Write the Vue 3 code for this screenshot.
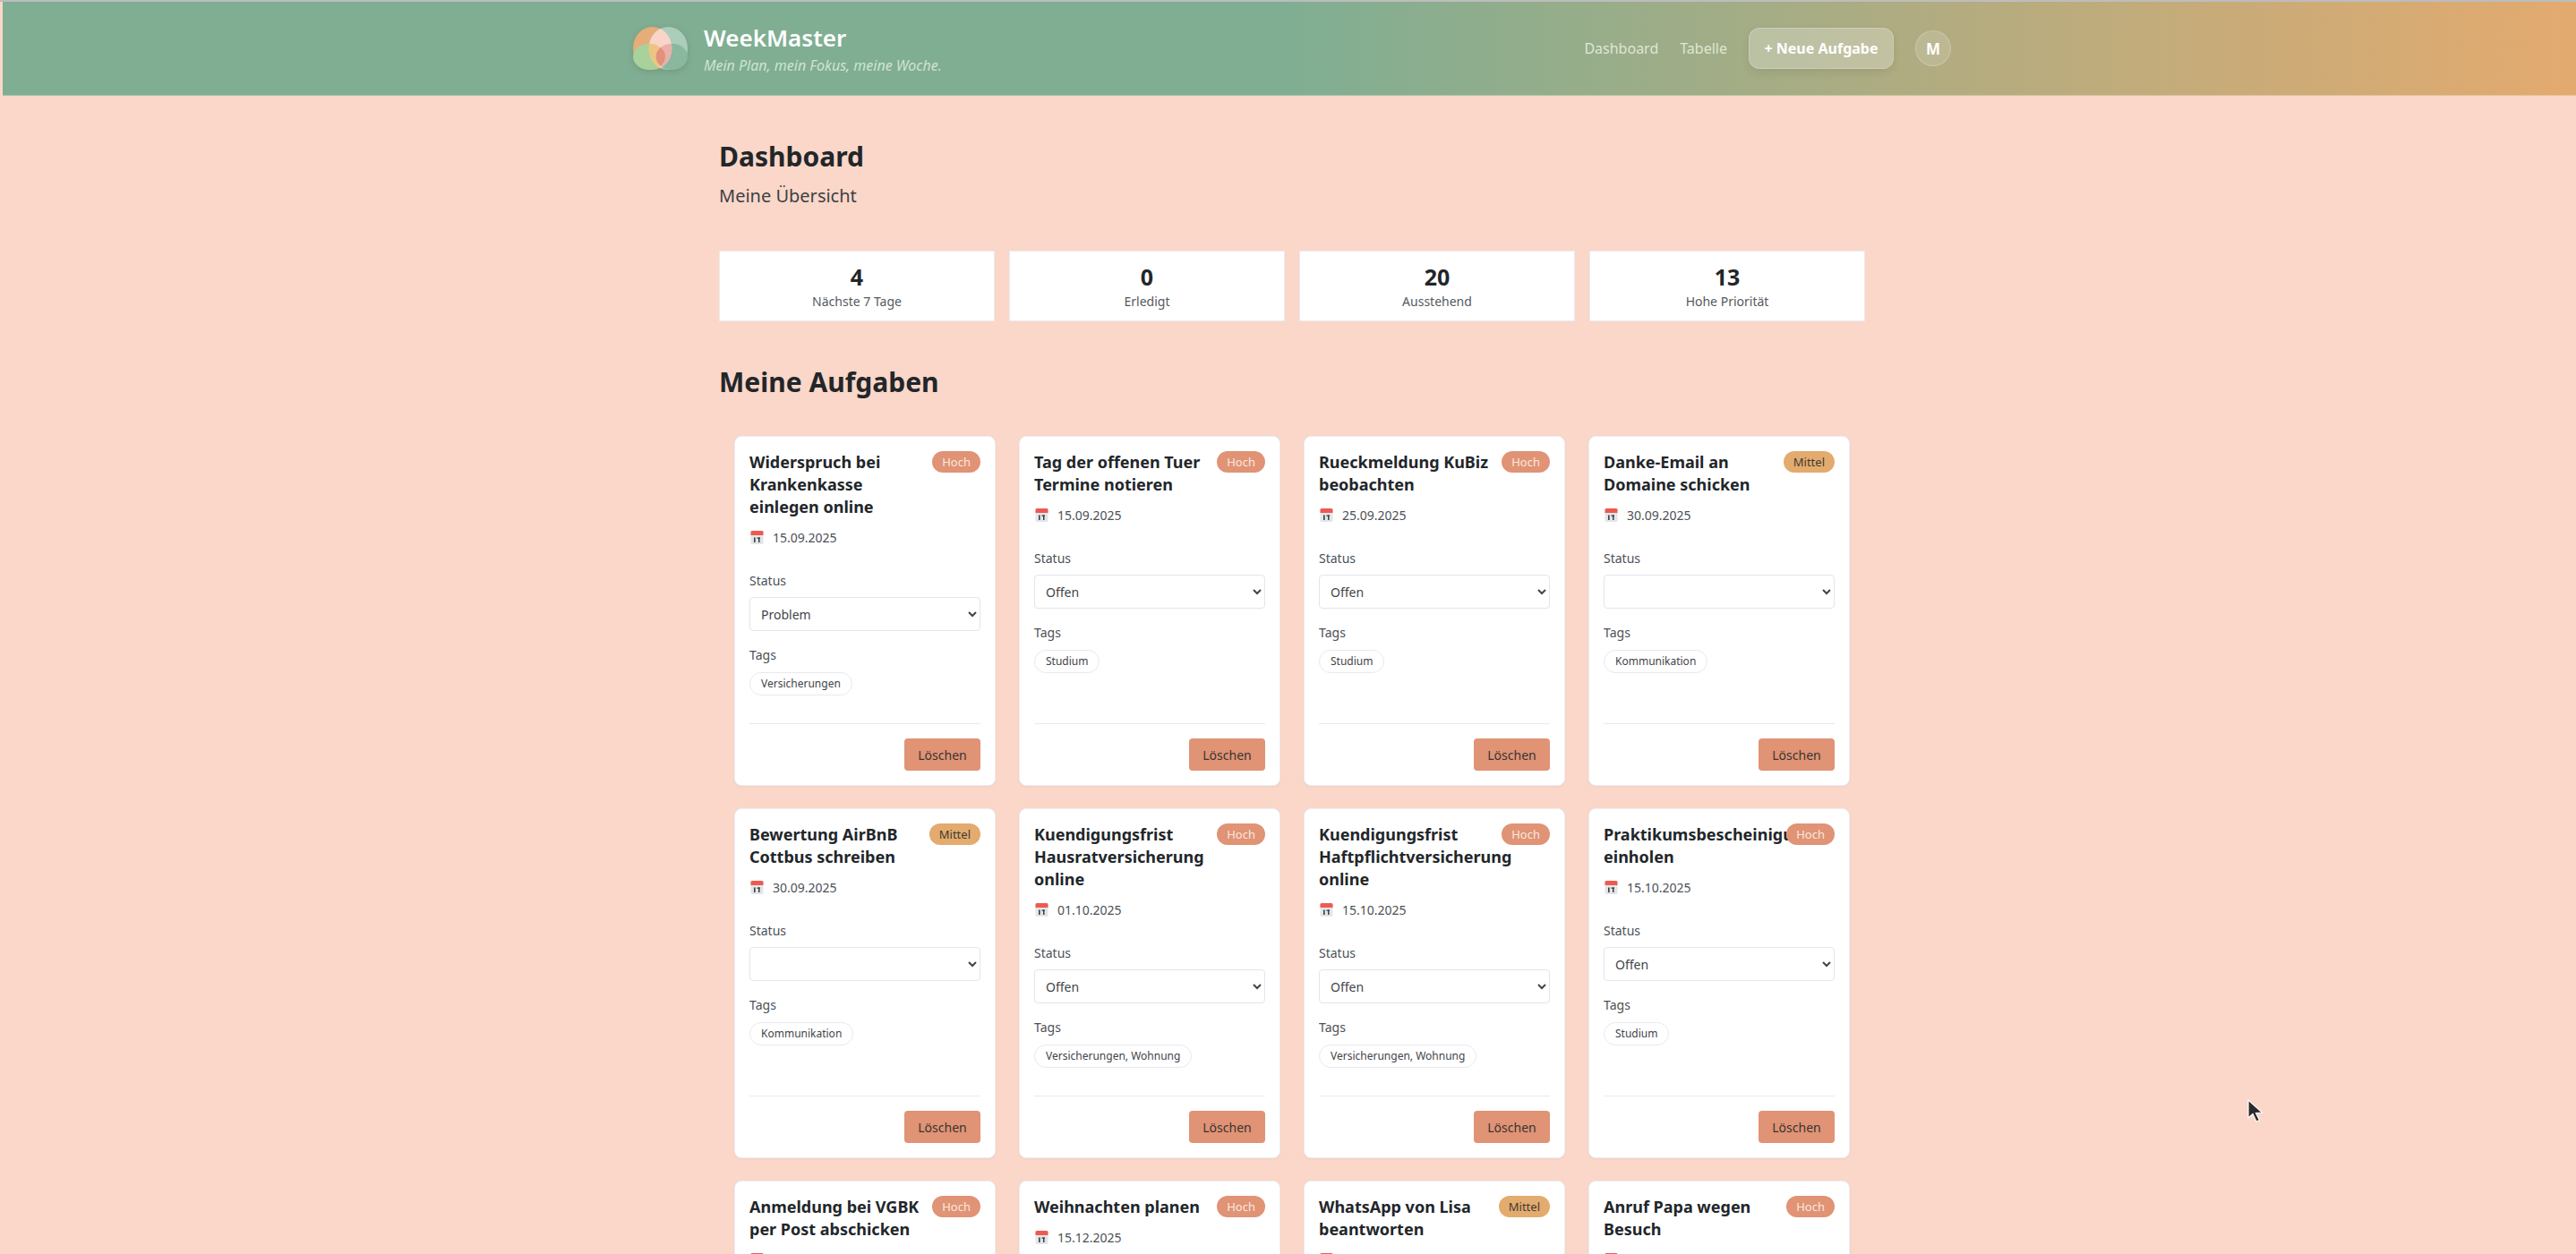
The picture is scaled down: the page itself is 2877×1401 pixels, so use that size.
<template>
  <div class="page">
    <header class="topbar">
      <div class="topbar__inner">
        <div class="brand">
          <svg class="brand__logo" width="61" height="48" viewBox="25 28 183 144">
            <defs>
              <clipPath id="leftLeaf"><ellipse cx="90" cy="100" rx="65" ry="72" /></clipPath>
              <clipPath id="rightLeaf"><ellipse cx="143" cy="100" rx="65" ry="72" /></clipPath>
              <clipPath id="lowLeft"><ellipse cx="79" cy="128" rx="54" ry="44" /></clipPath>
            </defs>
            <ellipse cx="90" cy="100" rx="65" ry="72" fill="#e6ad78" />
            <ellipse cx="143" cy="100" rx="65" ry="72" fill="#abcdb9" />
            <ellipse cx="79" cy="128" rx="54" ry="44" fill="#a9d19b" />
            <ellipse cx="155" cy="128" rx="53" ry="44" fill="#8ab89f" />
            <g clip-path="url(#leftLeaf)">
              <g clip-path="url(#rightLeaf)">
                <rect x="25" y="28" width="183" height="144" fill="#fbd4c9" />
                <ellipse cx="79" cy="128" rx="54" ry="44" fill="#edc581" />
                <ellipse cx="155" cy="128" rx="53" ry="44" fill="#eab0a9" />
                <g clip-path="url(#lowLeft)">
                  <ellipse cx="155" cy="128" rx="53" ry="44" fill="#e2917a" />
                </g>
              </g>
            </g>
          </svg>
          <div class="brand__text">
            <div class="brand__name">WeekMaster</div>
            <div class="brand__claim">Mein Plan, mein Fokus, meine Woche.</div>
          </div>
        </div>
        <nav class="nav">
          <a class="nav__link">Dashboard</a>
          <a class="nav__link">Tabelle</a>
          <button class="nav__add">+ Neue Aufgabe</button>
          <div class="nav__avatar">M</div>
        </nav>
      </div>
    </header>

    <main class="main">
      <h1 class="main__title">Dashboard</h1>
      <p class="main__sub">Meine Übersicht</p>

      <section class="stats">
        <div v-for="s in stats" :key="s.label" class="stat">
          <div class="stat__num">{{ s.value }}</div>
          <div class="stat__label">{{ s.label }}</div>
        </div>
      </section>

      <h2 class="main__heading">Meine Aufgaben</h2>

      <section class="tasks">
        <article v-for="t in tasks" :key="t.title" class="task">
          <div class="task__head">
            <h3 class="task__title">{{ t.title }}</h3>
            <span class="badge" :class="t.prio === 'Hoch' ? 'badge--high' : 'badge--mid'">{{ t.prio }}</span>
          </div>
          <div class="task__date">
            <svg class="cal" width="17" height="16" viewBox="0 0 17 16">
              <rect x="1.500" y="1" width="14" height="15" rx="1.500" fill="#e3e6e8" />
              <path d="M1.500 6V2.500A1.500 1.500 0 0 1 3 1h11a1.500 1.500 0 0 1 1.500 1.500V6z" fill="#ee5a52" />
              <rect x="5" y="8.500" width="1.600" height="5.500" fill="#3c4043" />
              <rect x="8.500" y="8.500" width="3.500" height="1.300" fill="#3c4043" />
              <rect x="10" y="8.500" width="1.500" height="5.500" fill="#3c4043" />
            </svg>
            <span>{{ t.date }}</span>
          </div>
          <template v-if="t.tags">
            <label class="task__label task__label--status">Status</label>
            <select class="task__select" :value="t.status">
              <option value=""></option>
              <option>Offen</option>
              <option>Problem</option>
              <option>Erledigt</option>
            </select>
            <label class="task__label task__label--tags">Tags</label>
            <div><span class="tag">{{ t.tags }}</span></div>
            <div class="task__foot">
              <button class="task__delete">Löschen</button>
            </div>
          </template>
        </article>
      </section>
    </main>

    <svg class="cursor" width="20" height="28" viewBox="0 0 20 28">
      <path d="M2 1 L2 21 L7 16.500 L11 25 L14.500 23.500 L10.500 15.500 L17.500 15 Z" fill="#2b2b2d" stroke="#fff" stroke-width="1.200" />
    </svg>
  </div>
</template>

<script setup>
const stats = [
  { value: 4, label: 'Nächste 7 Tage' },
  { value: 0, label: 'Erledigt' },
  { value: 20, label: 'Ausstehend' },
  { value: 13, label: 'Hohe Priorität' },
]

const tasks = [
  { title: 'Widerspruch bei Krankenkasse einlegen online', prio: 'Hoch', date: '15.09.2025', status: 'Problem', tags: 'Versicherungen' },
  { title: 'Tag der offenen Tuer Termine notieren', prio: 'Hoch', date: '15.09.2025', status: 'Offen', tags: 'Studium' },
  { title: 'Rueckmeldung KuBiz beobachten', prio: 'Hoch', date: '25.09.2025', status: 'Offen', tags: 'Studium' },
  { title: 'Danke-Email an Domaine schicken', prio: 'Mittel', date: '30.09.2025', status: '', tags: 'Kommunikation' },
  { title: 'Bewertung AirBnB Cottbus schreiben', prio: 'Mittel', date: '30.09.2025', status: '', tags: 'Kommunikation' },
  { title: 'Kuendigungsfrist Hausratversicherung online', prio: 'Hoch', date: '01.10.2025', status: 'Offen', tags: 'Versicherungen, Wohnung' },
  { title: 'Kuendigungsfrist Haftpflichtversicherung online', prio: 'Hoch', date: '15.10.2025', status: 'Offen', tags: 'Versicherungen, Wohnung' },
  { title: 'Praktikumsbescheinigung einholen', prio: 'Hoch', date: '15.10.2025', status: 'Offen', tags: 'Studium' },
  { title: 'Anmeldung bei VGBK per Post abschicken', prio: 'Hoch', date: '' },
  { title: 'Weihnachten planen', prio: 'Hoch', date: '15.12.2025' },
  { title: 'WhatsApp von Lisa beantworten', prio: 'Mittel', date: '' },
  { title: 'Anruf Papa wegen Besuch', prio: 'Hoch', date: '' },
]
</script>

<style>
html,
body {
  margin: 0;
  height: 100%;
  overflow: hidden;
  background: #fad7c8;
}
</style>

<style scoped>
.page {
  position: relative;
  height: 1401px;
  overflow: hidden;
  box-sizing: border-box;
  border-top: 2px solid #bdbdbd;
  padding-left: 3px;
  font-family: "Noto Sans", sans-serif;
  color: #22262a;
}

.topbar {
  height: 105px;
  box-sizing: border-box;
  padding-left: 6px;
  border-bottom: 1px solid rgba(255, 255, 255, 0.25);
  background: linear-gradient(90deg, #80ae92 50%, #e3aa6f 100%);
}

.topbar__inner {
  width: 1472px;
  height: 100%;
  margin: 0 auto;
  display: flex;
  align-items: center;
  justify-content: space-between;
}

.brand {
  display: flex;
  align-items: center;
  gap: 18px;
}

.brand__logo {
  filter: drop-shadow(0 2px 3px rgba(0, 0, 0, 0.12));
}

.brand__name {
  font-size: 26px;
  font-weight: 600;
  line-height: 34px;
  color: #fff;
}

.brand__claim {
  font-size: 16px;
  font-style: italic;
  line-height: 22px;
  margin-top: 3px;
  color: #cfe3d4;
}

.nav {
  display: flex;
  align-items: center;
}

.nav__link {
  font-size: 16px;
  color: #dfe6d5;
  margin-right: 24px;
}

.nav__add {
  width: 162px;
  height: 46px;
  margin-right: 24px;
  font-family: inherit;
  font-size: 16px;
  font-weight: 700;
  color: #fff;
  background: rgba(255, 255, 255, 0.25);
  border: 1px solid rgba(255, 255, 255, 0.2);
  border-radius: 12px;
  box-shadow: 0 4px 10px rgba(0, 0, 0, 0.08);
}

.nav__avatar {
  width: 40px;
  height: 40px;
  box-sizing: border-box;
  display: flex;
  align-items: center;
  justify-content: center;
  font-size: 17px;
  font-weight: 700;
  color: #fff;
  border-radius: 50%;
  background: rgba(255, 255, 255, 0.15);
  border: 1px solid rgba(255, 255, 255, 0.2);
}

.main {
  width: 1286px;
  box-sizing: border-box;
  margin: 0 auto;
  padding-left: 6px;
}

.main__title {
  margin: 48px 0 0;
  font-size: 30px;
  font-weight: 700;
  line-height: 40px;
}

.main__sub {
  margin: 11px 0 0;
  font-size: 20px;
  line-height: 26px;
  color: #3c4146;
}

.stats {
  display: grid;
  grid-template-columns: repeat(4, 1fr);
  gap: 16px;
  margin-top: 48px;
}

.stat {
  height: 79px;
  box-sizing: border-box;
  padding-top: 12px;
  text-align: center;
  background: #fff;
  border: 1px solid #e9ebf1;
}

.stat__num {
  font-size: 25px;
  font-weight: 700;
  line-height: 32px;
}

.stat__label {
  font-size: 14px;
  line-height: 22px;
  margin-top: 1px;
  color: #555a60;
}

.main__heading {
  margin: 46px 0 0;
  font-size: 30px;
  font-weight: 700;
  line-height: 44px;
}

.tasks {
  display: grid;
  grid-template-columns: repeat(4, 292px);
  gap: 25px 26px;
  margin-top: 38px;
  padding-left: 17px;
}

.task {
  display: flex;
  flex-direction: column;
  min-height: 391px;
  box-sizing: border-box;
  padding: 16px;
  background: #fff;
  border: 1px solid #eceef3;
  border-radius: 8px;
  box-shadow: 0 1px 3px rgba(0, 0, 0, 0.04);
}

.task__head {
  display: flex;
  justify-content: space-between;
  align-items: flex-start;
  gap: 8px;
}

.task__title {
  flex: 1;
  min-width: 0;
  margin: 0;
  font-size: 18px;
  font-weight: 700;
  line-height: 25px;
}

.badge {
  flex: none;
  height: 24px;
  padding: 0 11px;
  font-size: 13px;
  line-height: 24px;
  border-radius: 12px;
}

.badge--high {
  background: #e09375;
  color: #fbe8df;
}

.badge--mid {
  background: #e3ab6e;
  color: #3e3a33;
}

.task__date {
  display: flex;
  align-items: center;
  gap: 9px;
  height: 22px;
  margin-top: 10px;
  font-size: 14px;
  color: #4b5056;
}

.task__label {
  display: block;
  font-size: 14px;
  line-height: 20px;
  color: #4b5056;
}

.task__label--status {
  margin-top: 28px;
}

.task__label--tags {
  margin-top: 17px;
}

.task__select {
  width: 100%;
  height: 38px;
  margin-top: 8px;
  padding: 0 8px;
  font-family: inherit;
  font-size: 14px;
  color: #3f4449;
  background: #fff;
  border: 1px solid #e3e5ec;
  border-radius: 4px;
}

.tag {
  display: inline-block;
  height: 26px;
  margin-top: 9px;
  box-sizing: border-box;
  padding: 0 12px;
  font-size: 12px;
  line-height: 24px;
  color: #3f4449;
  border: 1px solid #e8eaf0;
  border-radius: 13px;
}

.task__foot {
  display: flex;
  justify-content: flex-end;
  margin-top: auto;
  padding-top: 16px;
  border-top: 1px solid #e8eaf0;
}

.task__delete {
  width: 85px;
  height: 36px;
  font-family: inherit;
  font-size: 14px;
  color: #3a3330;
  background: #e09375;
  border: none;
  border-radius: 4px;
}

.cursor {
  position: absolute;
  left: 2509px;
  top: 1226px;
}
</style>
